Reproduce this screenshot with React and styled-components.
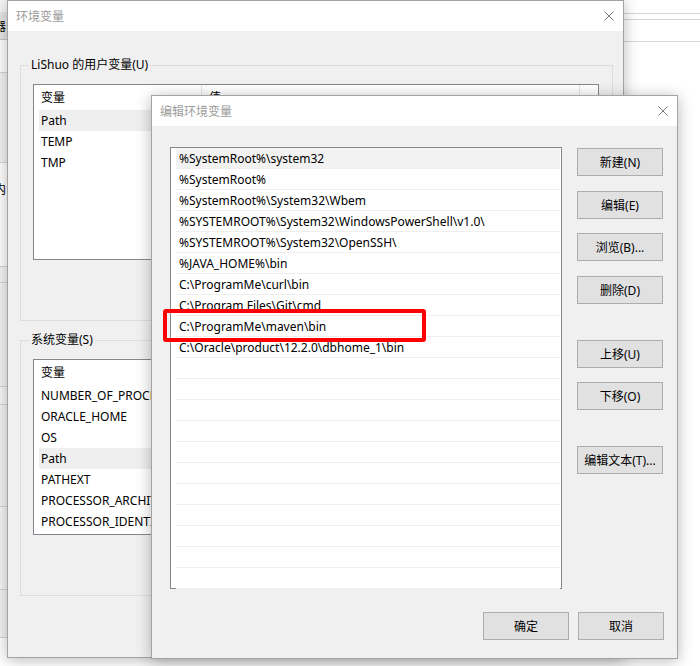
import styled, { createGlobalStyle } from 'styled-components'

const GlobalStyle = createGlobalStyle`
	html, body {
		margin: 0;
		padding: 0;
		background: #fff;
	}
	body {
		font-family: "Noto Sans", "Noto Sans CJK SC", sans-serif;
		font-size: 12px;
		color: #000;
	}
`

const userVars = [
	{ name: 'Path', selected: true },
	{ name: 'TEMP' },
	{ name: 'TMP' },
]

const systemVars = [
	{ name: 'NUMBER_OF_PROCESSORS' },
	{ name: 'ORACLE_HOME' },
	{ name: 'OS' },
	{ name: 'Path', selected: true },
	{ name: 'PATHEXT' },
	{ name: 'PROCESSOR_ARCHITECTURE' },
	{ name: 'PROCESSOR_IDENTIFIER' },
]

const paths = [
	'%SystemRoot%\\system32',
	'%SystemRoot%',
	'%SystemRoot%\\System32\\Wbem',
	'%SYSTEMROOT%\\System32\\WindowsPowerShell\\v1.0\\',
	'%SYSTEMROOT%\\System32\\OpenSSH\\',
	'%JAVA_HOME%\\bin',
	'C:\\ProgramMe\\curl\\bin',
	'C:\\Program Files\\Git\\cmd',
	'C:\\ProgramMe\\maven\\bin',
	'C:\\Oracle\\product\\12.2.0\\dbhome_1\\bin',
]

const sideButtons = [
	{ label: '新建(N)', gap: 0 },
	{ label: '编辑(E)', gap: 15 },
	{ label: '浏览(B)...', gap: 14 },
	{ label: '删除(D)', gap: 15 },
	{ label: '上移(U)', gap: 36 },
	{ label: '下移(O)', gap: 14 },
	{ label: '编辑文本(T)...', gap: 36 },
]

const TOTAL_ROWS = 21

const CloseIcon = () => (
	<svg width="10" height="10" viewBox="0 0 10 10">
		<path d="M0.5 0.5 L9.5 9.5 M9.5 0.5 L0.5 9.5" stroke="#7a7a7a" strokeWidth="1" fill="none" />
	</svg>
)

const VarTable = ({ rows }) => (
	<VarList>
		<VarHeader>
			<HeadCell $w={168}>变量</HeadCell>
			<HeadCell $w={378}>值</HeadCell>
		</VarHeader>
		{rows.map(v => (
			<VarRow key={v.name} $selected={v.selected}>{v.name}</VarRow>
		))}
	</VarList>
)

const App = () => {
	return (
		<>
			<GlobalStyle />
			<Desktop>
				<BackWindow>
					<LeftStrip>
						<Band $h={12} $bg="#f7f7f7" />
						<Tab>器</Tab>
						<Band $h={32} $bg="#fff" $line />
						<Band $h={89} $bg="#f3f3f3" $line />
						<Band $h={52} $bg="#fff">内</Band>
						<Band $h={51} $bg="#fff" $line />
						<Band $h={15} $bg="#f5f5f5" $line />
						<Band $h={103} $bg="#f3f3f3" $line />
						<Band $h={17} $bg="#f7f7f7" $line />
						<Band $h={101} $bg="#f3f3f3" $line />
						<Band $h={82} $bg="#f5f5f5" $line />
						<Band $h={47} $bg="#f3f3f3" $line />
					</LeftStrip>
					<RightStrip>
						<Band $h={13} $bg="#fff" $line />
						<Band $h={5} $bg="#fff" $line />
						<Band $h={21} $bg="#fff" $line />
					</RightStrip>
				</BackWindow>

				<Window $x={7} $y={0} $w={617} $h={658}>
					<TitleBar>
						<Title>环境变量</Title>
						<CloseIcon />
					</TitleBar>
					<EnvBody>
						<Group $top={26}>
							<Legend>LiShuo 的用户变量(U)</Legend>
							<VarTable rows={userVars} />
						</Group>
						<Group $top={11}>
							<Legend>系统变量(S)</Legend>
							<VarTable rows={systemVars} />
						</Group>
					</EnvBody>
				</Window>

				<Window $x={151} $y={95} $w={527} $h={564}>
					<TitleBar>
						<Title>编辑环境变量</Title>
						<CloseIcon />
					</TitleBar>
					<EditBody>
						<EditMain>
							<PathList>
								{Array.from({ length: TOTAL_ROWS }).map((_, i) => (
									<PathRow key={i} $selected={i === 0}>{paths[i] || ''}</PathRow>
								))}
								<Marker />
							</PathList>
							<SideButtons>
								{sideButtons.map(b => (
									<Button key={b.label} $gapTop={b.gap}>{b.label}</Button>
								))}
							</SideButtons>
						</EditMain>
						<Footer>
							<Button>确定</Button>
							<Button>取消</Button>
						</Footer>
					</EditBody>
				</Window>
			</Desktop>
		</>
	)
}

const Desktop = styled.div`
	position: relative;
	width: 700px;
	height: 666px;
	overflow: hidden;
	background: #fff;
`

const BackWindow = styled.div`
	position: absolute;
	inset: 0;
	display: flex;
	justify-content: space-between;
	background: #fff;
`

const LeftStrip = styled.div`
	width: 7px;
	display: flex;
	flex-direction: column;
	overflow: hidden;
`

const RightStrip = styled.div`
	width: 72px;
	display: flex;
	flex-direction: column;
`

const Band = styled.div`
	height: ${p => p.$h}px;
	flex: none;
	background: ${p => p.$bg};
	border-bottom: ${p => (p.$line ? '1px solid #d6d6d6' : 'none')};
	display: flex;
	align-items: center;
	margin-left: -6px;
	white-space: nowrap;
	overflow: hidden;
`

const Tab = styled.div`
	height: 27px;
	flex: none;
	background: #e6e6e6;
	border-bottom: 1px solid #c8c8c8;
	display: flex;
	align-items: center;
	margin-left: -6px;
	white-space: nowrap;
`

const Window = styled.div`
	position: absolute;
	left: ${p => p.$x}px;
	top: ${p => p.$y}px;
	width: ${p => p.$w}px;
	height: ${p => p.$h}px;
	box-sizing: border-box;
	border: 1px solid #a3a3a3;
	background: #f0f0f0;
	box-shadow: 0 2px 14px rgba(0, 0, 0, 0.28);
	display: flex;
	flex-direction: column;
`

const TitleBar = styled.div`
	height: 30px;
	flex: none;
	background: #fff;
	display: flex;
	align-items: center;
	justify-content: space-between;
	padding: 0 9px 0 8px;
`

const Title = styled.span`
	color: #9b9b9b;
	font-size: 12px;
`

const EnvBody = styled.div`
	padding: 0 10px 0 12px;
	display: flex;
	flex-direction: column;
`

const Group = styled.fieldset`
	margin: ${p => p.$top}px 0 0 0;
	padding: 0 13px 60px 12px;
	border: 1px solid #dcdcdc;
	min-width: 0;
`

const Legend = styled.legend`
	margin-left: -4px;
	padding: 0 2px;
	line-height: 16px;
	font-size: 12px;
	color: #000;
`

const VarList = styled.div`
	margin-top: 11px;
	height: 176px;
	box-sizing: border-box;
	border: 1px solid #828790;
	background: #fff;
	overflow: hidden;
`

const VarHeader = styled.div`
	height: 24px;
	display: flex;
	margin-bottom: 1px;
`

const HeadCell = styled.div`
	width: ${p => p.$w}px;
	flex: none;
	box-sizing: border-box;
	padding-left: 7px;
	border-right: 1px solid #e5e5e5;
	display: flex;
	align-items: center;
`

const VarRow = styled.div`
	height: 21px;
	margin-left: 5px;
	padding-left: 2px;
	display: flex;
	align-items: center;
	background: ${p => (p.$selected ? '#efefef' : 'transparent')};
	white-space: nowrap;
`

const EditBody = styled.div`
	flex: 1;
	padding: 21px 13px 0 18px;
	display: flex;
	flex-direction: column;
`

const EditMain = styled.div`
	display: flex;
	gap: 15px;
	align-items: flex-start;
`

const PathList = styled.div`
	position: relative;
	width: 392px;
	height: 442px;
	box-sizing: border-box;
	border: 1px solid #828790;
	background: #fff;
	padding: 0 1px 0 5px;
`

const PathRow = styled.div`
	height: 21px;
	box-sizing: border-box;
	border-bottom: 1px solid #efefef;
	padding-left: 3px;
	display: flex;
	align-items: center;
	background: ${p => (p.$selected ? '#f2f2f2' : '#fff')};
	white-space: nowrap;
	overflow: hidden;
`

const Marker = styled.div`
	position: absolute;
	left: -8px;
	top: 161px;
	width: 263px;
	height: 33px;
	box-sizing: border-box;
	border: 4px solid #ff0000;
	border-radius: 3px;
`

const SideButtons = styled.div`
	width: 86px;
	padding-top: 1px;
	display: flex;
	flex-direction: column;
`

const Button = styled.button`
	width: 86px;
	height: 28px;
	margin-top: ${p => p.$gapTop || 0}px;
	padding: 0;
	box-sizing: border-box;
	border: 1px solid #adadad;
	background: #e1e1e1;
	font-family: "Noto Sans", "Noto Sans CJK SC", sans-serif;
	font-size: 12px;
	color: #000;
	white-space: nowrap;
`

const Footer = styled.div`
	margin-top: 23px;
	display: flex;
	justify-content: flex-end;
	gap: 9px;
`

export default App
